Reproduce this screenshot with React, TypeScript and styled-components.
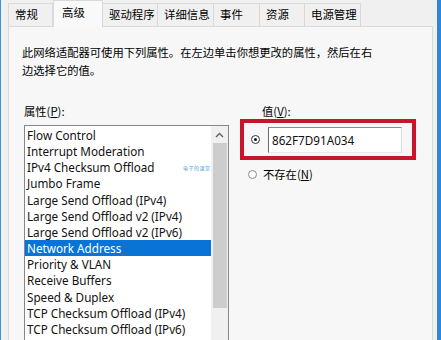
import React from "react";
import styled, { createGlobalStyle } from "styled-components";

const Global = createGlobalStyle`
  html, body { margin: 0; padding: 0; background: #f0f0f0; }
  body { font-family: "Noto Sans CJK SC", "Noto Sans", sans-serif; }
`;

const Window = styled.div`
  width: 441px;
  height: 340px;
  box-sizing: border-box;
  border-left: 1px solid #3d8fd6;
  border-right: 4px solid #2f86d3;
  padding: 0 4px 0 7px;
  background: #f0f0f0;
  display: flex;
  flex-direction: column;
  overflow: hidden;
  color: #000;
`;

const TabStrip = styled.div`
  display: flex;
  align-items: flex-end;
  height: 26px;
  flex: none;
  position: relative;
  z-index: 1;
`;

const Tab = styled.div<{ $w: number; $active?: boolean; $first?: boolean }>`
  box-sizing: border-box;
  width: ${(p) => p.$w}px;
  height: ${(p) => (p.$active ? 27 : 23)}px;
  margin-bottom: ${(p) => (p.$active ? -1 : 0)}px;
  padding: ${(p) => (p.$active ? "3px 0 0 8px" : "2px 0 0 6px")};
  border: 1px solid #d9d9d9;
  border-bottom: none;
  border-left: ${(p) => (p.$first || p.$active ? "1px solid #d9d9d9" : "none")};
  background: ${(p) => (p.$active ? "#f9f9f9" : "#f0f0f0")};
  font-size: 11.4px;
  line-height: 17px;
  white-space: nowrap;
`;

const Panel = styled.div`
  flex: 1;
  border: 1px solid #d9d9d9;
  background: #f7f7f7;
  padding: 16px 0 0 13px;
  display: flex;
  flex-direction: column;
`;

const Description = styled.p`
  margin: 0;
  font-size: 11.3px;
  line-height: 18px;
  width: 353px;
`;

const Columns = styled.div`
  display: grid;
  grid-template-columns: 205px 176px;
  column-gap: 11px;
  margin: 24px 0 0 2px;
`;

const Column = styled.div`
  display: flex;
  flex-direction: column;
`;

const Label = styled.div<{ $indent?: number }>`
  font-size: 11.3px;
  line-height: 16px;
  padding-left: ${(p) => p.$indent ?? 0}px;
  u { text-decoration: underline; text-underline-offset: 1px; }
`;

const ListBox = styled.div`
  margin-top: 6px;
  height: 240px;
  border: 1px solid #828790;
  background: #fff;
  display: flex;
  position: relative;
`;

const Items = styled.ul`
  list-style: none;
  margin: 0;
  padding: 1px 0 0 0;
  flex: 1;
`;

const Item = styled.li<{ $selected?: boolean }>`
  height: 16.17px;
  line-height: 16px;
  padding-left: 2px;
  font-family: "Noto Sans", sans-serif;
  font-size: 11.7px;
  white-space: nowrap;
  overflow: hidden;
  background: ${(p) => (p.$selected ? "#0a74d6" : "transparent")};
  color: ${(p) => (p.$selected ? "#fff" : "#111")};
`;

const ScrollBar = styled.div`
  width: 17px;
  flex: none;
  background: #f0f0f0;
  display: flex;
  flex-direction: column;
  align-items: center;
`;

const ArrowBtn = styled.div`
  height: 17px;
  width: 17px;
  display: flex;
  align-items: center;
  justify-content: center;
`;

const Thumb = styled.div`
  width: 14px;
  height: 165px;
  background: #cdcdcd;
`;

const Watermark = styled.span`
  position: absolute;
  left: 158px;
  top: 38px;
  font-size: 5px;
  letter-spacing: 0.5px;
  color: #4a9be0;
  white-space: nowrap;
`;

const RedFrame = styled.div`
  margin-top: 0;
  height: 41px;
  box-sizing: border-box;
  border: 4px solid #c5162b;
  display: flex;
  align-items: center;
  padding: 0 10px 0 7px;
  gap: 8px;
`;

const Radio = styled.span<{ $checked?: boolean }>`
  width: 9px;
  height: 9px;
  box-sizing: border-box;
  border-radius: 50%;
  border: 1px solid ${(p) => (p.$checked ? "#333" : "#8a8a8a")};
  background: #fff;
  display: flex;
  align-items: center;
  justify-content: center;
  flex: none;
  &::after {
    content: "";
    width: 3px;
    height: 3px;
    border-radius: 50%;
    background: ${(p) => (p.$checked ? "#111" : "transparent")};
  }
`;

const TextInput = styled.div`
  flex: 1;
  height: 26px;
  box-sizing: border-box;
  background: #fff;
  border-top: 1px solid #8a8a8a;
  border-left: 1px solid #6a6a6a;
  border-right: 1px solid #e0e0e0;
  border-bottom: 1px solid #e8e8e8;
  padding-left: 3px;
  font-family: "Noto Sans", sans-serif;
  font-size: 11.7px;
  line-height: 24px;
  color: #111;
`;

const OptionRow = styled.label`
  display: flex;
  align-items: center;
  gap: 6px;
  margin: 6px 0 0 8px;
  font-size: 11.3px;
  line-height: 16px;
  u { text-decoration: underline; }
`;

const items = [
  "Flow Control",
  "Interrupt Moderation",
  "IPv4 Checksum Offload",
  "Jumbo Frame",
  "Large Send Offload (IPv4)",
  "Large Send Offload v2 (IPv4)",
  "Large Send Offload v2 (IPv6)",
  "Network Address",
  "Priority & VLAN",
  "Receive Buffers",
  "Speed & Duplex",
  "TCP Checksum Offload (IPv4)",
  "TCP Checksum Offload (IPv6)",
  "Transmit Buffers",
];

const tabs: { label: string; w: number; active?: boolean }[] = [
  { label: "常规", w: 45 },
  { label: "高级", w: 50, active: true },
  { label: "驱动程序", w: 55 },
  { label: "详细信息", w: 56 },
  { label: "事件", w: 46 },
  { label: "资源", w: 45 },
  { label: "电源管理", w: 56 },
];

export default function App() {
  return (
    <>
      <Global />
      <Window>
        <TabStrip>
          {tabs.map((t, i) => (
            <Tab key={t.label} $w={t.w} $active={t.active} $first={i === 0}>
              {t.label}
            </Tab>
          ))}
        </TabStrip>
        <Panel>
          <Description>
            此网络适配器可使用下列属性。在左边单击你想更改的属性，然后在右边选择它的值。
          </Description>
          <Columns>
            <Column>
              <Label>
                属性(<u>P</u>):
              </Label>
              <ListBox>
                <Items>
                  {items.map((it) => (
                    <Item key={it} $selected={it === "Network Address"}>
                      {it}
                    </Item>
                  ))}
                </Items>
                <ScrollBar>
                  <ArrowBtn>
                    <svg width="9" height="6" viewBox="0 0 9 6">
                      <path d="M1 5 L4.5 1.5 L8 5" fill="none" stroke="#606060" strokeWidth="1.4" />
                    </svg>
                  </ArrowBtn>
                  <Thumb />
                </ScrollBar>
                <Watermark>电子的课堂</Watermark>
              </ListBox>
            </Column>
            <Column>
              <Label $indent={22}>
                值(<u>V</u>):
              </Label>
              <RedFrame>
                <Radio $checked />
                <TextInput>862F7D91A034</TextInput>
              </RedFrame>
              <OptionRow>
                <Radio />
                <span>
                  不存在(<u>N</u>)
                </span>
              </OptionRow>
            </Column>
          </Columns>
        </Panel>
      </Window>
    </>
  );
}
